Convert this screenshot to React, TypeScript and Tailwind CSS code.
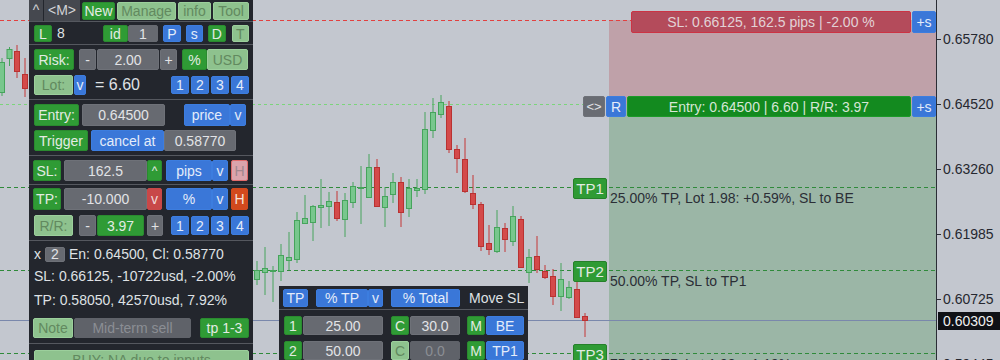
import clsx from "clsx"
import { ReactNode } from "react"

type Tone = "green" | "faded" | "grey" | "blue" | "red" | "orange" | "pink" | "dim" | "dark"

const tones: Record<Tone, string> = {
    green: "bg-[#2f9b35] border-[#2a8a2f] text-[#e3ebe3]",
    faded: "bg-[#8ec28e] border-[#9ccf9c] text-[#62895f]",
    grey: "bg-[#676a71] border-[#6e7178] text-[#e2e3e6]",
    blue: "bg-[#3a77d8] border-[#3c7ddf] text-[#e4ecfa]",
    red: "bg-[#c84848] border-[#c84848] text-[#f0dada]",
    orange: "bg-[#d2491d] border-[#d2491d] text-[#f5e2da]",
    pink: "bg-[#dba4ac] border-[#e06b6b] text-[#a2878e]",
    dim: "bg-[#5f6269] border-[#5f6269] text-[#8b8e94]",
    dark: "bg-[#45484f] border-[#45484f] text-[#d2d3d6]",
}

// small square-ish control used everywhere in the panels
function B({ t, className, children }: { t: Tone; className?: string; children: ReactNode }) {
    return (
        <div className={clsx("flex items-center justify-center rounded-[2px] border h-full leading-none shrink-0 whitespace-nowrap", tones[t], className)}>
            {children}
        </div>
    )
}

// [x, bodyTop, bodyBottom, wickTop, wickBottom, up]
const candles: [number, number, number, number, number, boolean][] = [
    [2, 62, 92, 58, 96, true],
    [9.5, 49, 58, 47, 66, true],
    [17, 51, 71, 45, 78, false],
    [25, 74, 88, 58, 97, false],
    [257, 270, 279, 261, 285, true],
    [265, 268, 272, 247, 295, true],
    [273, 270, 271, 266, 302, true],
    [281, 255, 271, 244, 281, true],
    [289, 257, 260, 232, 270, true],
    [297, 220, 259, 212, 263, true],
    [305, 218, 223, 195, 224, true],
    [313, 206, 222, 205, 241, true],
    [321, 205, 207, 179, 228, true],
    [329, 201, 206, 192, 226, true],
    [337, 202, 218, 191, 221, false],
    [345, 200, 219, 193, 237, true],
    [353, 186, 202, 182, 208, true],
    [361, 187, 188, 166, 224, true],
    [369, 167, 197, 154, 198, true],
    [377, 167, 206, 159, 207, false],
    [385, 196, 207, 187, 227, true],
    [393, 182, 194, 173, 203, true],
    [401, 182, 212, 177, 227, false],
    [409, 188, 208, 179, 217, true],
    [417, 188, 190, 179, 197, true],
    [425, 129, 189, 112, 194, true],
    [433, 112, 130, 98, 138, true],
    [441, 102, 114, 95, 118, true],
    [449, 106, 149, 101, 153, false],
    [457, 149, 158, 145, 173, false],
    [465, 159, 191, 138, 193, false],
    [473, 193, 204, 175, 209, false],
    [481, 204, 246, 202, 251, false],
    [489, 243, 249, 225, 255, false],
    [497, 227, 251, 210, 253, true],
    [505, 228, 239, 223, 252, false],
    [513, 216, 241, 206, 246, true],
    [521, 219, 267, 216, 267, false],
    [529, 257, 272, 249, 283, true],
    [537, 256, 269, 236, 273, false],
    [545, 271, 277, 265, 279, false],
    [553, 276, 296, 269, 305, false],
    [561, 279, 296, 263, 311, true],
    [569, 287, 297, 281, 299, true],
    [577, 289, 317, 282, 318, false],
    [585, 316, 320, 313, 337, false],
]

function Chart() {
    return (
        <svg className="absolute inset-0" width={1000} height={360}>
            <rect x={609} y={20} width={327} height={84} fill="#bfa1a9" />
            <rect x={609} y={104} width={327} height={256} fill="#9bb6a6" />
            <line x1={0} y1={20.5} x2={632} y2={20.5} stroke="#e2403f" strokeDasharray="4 3" />
            <line x1={0} y1={104.5} x2={583} y2={104.5} stroke="#7bd47b" strokeDasharray="3 3" />
            {[187.5, 270.5, 353.5].map((y) => (
                <line key={y} x1={0} y1={y} x2={936} y2={y} stroke="#2f8a3a" strokeDasharray="4 3" />
            ))}
            <line x1={0} y1={320.5} x2={936} y2={320.5} stroke="#7a88ac" />
            {candles.map(([x, bt, bb, wt, wb, up]) => (
                <g key={x}>
                    <line x1={x} y1={wt} x2={x} y2={wb} stroke={up ? "#46a45c" : "#c43636"} />
                    <rect
                        x={x - 2.5}
                        y={bt + 0.5}
                        width={5}
                        height={Math.max(bb - bt, 1)}
                        fill={up ? "#78c78d" : "#d44a4a"}
                        stroke={up ? "#46a45c" : "#b93232"}
                    />
                </g>
            ))}
            <line x1={936.5} y1={0} x2={936.5} y2={360} stroke="#2a2d35" />
            {[39, 104, 169, 234, 299, 364].map((y) => (
                <line key={y} x1={936} y1={y + 0.5} x2={941} y2={y + 0.5} stroke="#2a2d35" />
            ))}
        </svg>
    )
}

const axis = [
    ["0.65780", 39],
    ["0.64520", 104],
    ["0.63260", 169],
    ["0.61985", 234],
    ["0.60725", 299],
    ["0.59445", 364],
] as const

export default function App() {
    return (
        <div className="relative w-[1000px] h-[360px] overflow-hidden bg-[#c3c7cf] font-['Liberation_Sans',Arial,sans-serif] text-[14px]">
            <Chart />

            {/* price axis */}
            {axis.map(([p, y]) => (
                <div key={p} className="absolute left-[943px] h-[16px] leading-[16px] text-[#262830]" style={{ top: y - 8 }}>
                    {p}
                </div>
            ))}
            <div className="absolute left-[938px] top-[312px] w-[62px] h-[18px] bg-[#0f1116] text-[#f0f0f0] leading-[18px] pl-[5px]">
                0.60309
            </div>

            {/* SL / entry labels */}
            <div className="absolute left-[631px] top-[11px] flex h-[22px] gap-px">
                <B t="red" className="w-[280px] !bg-[#b44b5b] !border-[#cc3344] !text-[#e2d2d6]">SL: 0.66125, 162.5 pips | -2.00 %</B>
                <B t="blue" className="w-[24px]">+s</B>
            </div>
            <div className="absolute left-[583px] top-[96px] flex h-[21px] gap-px">
                <B t="grey" className="w-[22px] !bg-[#696c73] text-[13px]">&lt;&gt;</B>
                <B t="blue" className="w-[20px]">R</B>
                <B t="green" className="w-[284px] !bg-[#138a1f] !border-[#1c9a28] !text-[#d6e6d6]">Entry: 0.64500 | 6.60 | R/R: 3.97</B>
                <B t="blue" className="w-[24px]">+s</B>
            </div>

            {/* TP labels */}
            {[
                ["TP1", 178, "25.00% TP, Lot 1.98: +0.59%, SL to BE"],
                ["TP2", 261, "50.00% TP, SL to TP1"],
                ["TP3", 344, "75.00% TP, Lot 1.98: +1.19%"],
            ].map(([n, y, txt]) => (
                <div key={n} className="absolute left-[573px] flex items-start" style={{ top: y as number }}>
                    <B t="green" className="w-[34px] !h-[21px] text-[15px] !border-[#25802a]">{n}</B>
                    <div className="ml-[3px] mt-[12px] text-[#2b2e36] leading-[16px] whitespace-nowrap">{txt}</div>
                </div>
            ))}

            {/* main trade panel */}
            <div className="absolute left-[29px] top-0 w-[224px] h-[360px] bg-[#23262d] text-[#dfe1e4] flex flex-col">
                <div className="flex h-[23px] items-center border-b border-[#55585f]">
                    <div className="w-[14px] h-full bg-[#45484f] flex items-center justify-center text-[#d2d3d6]">^</div>
                    <div className="w-[36px] h-full ml-px bg-[#45484f] flex items-center justify-center text-[#d2d3d6]">&lt;M&gt;</div>
                    <div className="flex h-[18px] gap-[2px] ml-[2px]">
                        <B t="green" className="w-[33px]">New</B>
                        <B t="faded" className="w-[59px]">Manage</B>
                        <B t="faded" className="w-[33px]">info</B>
                        <B t="faded" className="w-[36px]">Tool</B>
                    </div>
                </div>

                <div className="pt-[3px] pb-[2px] border-b border-[#55585f]">
                    <div className="flex h-[17px] items-center">
                        <B t="green" className="w-[18px] ml-[5px]">L</B>
                        <span className="ml-[5px]">8</span>
                        <B t="green" className="w-[25px] ml-[38px]">id</B>
                        <B t="grey" className="w-[30px] !border-[#676a71]">1</B>
                        <B t="blue" className="w-[18px] ml-[5px]">P</B>
                        <B t="blue" className="w-[17px] ml-[5px]">s</B>
                        <B t="green" className="w-[18px] ml-[5px]">D</B>
                        <B t="faded" className="w-[17px] ml-[6px]">T</B>
                    </div>
                </div>

                <div className="pt-[4px] pb-[4px] border-b border-[#55585f] flex flex-col gap-[5px]">
                    <div className="flex h-[21px] items-center">
                        <B t="green" className="w-[40px] ml-[5px]">Risk:</B>
                        <B t="grey" className="w-[17px] ml-[5px]">-</B>
                        <B t="grey" className="w-[62px] ml-px">2.00</B>
                        <B t="grey" className="w-[17px] ml-px">+</B>
                        <B t="green" className="w-[25px] ml-[5px]">%</B>
                        <B t="faded" className="w-[41px]">USD</B>
                    </div>
                    <div className="flex h-[20px] items-center">
                        <B t="faded" className="w-[39px] ml-[5px]">Lot:</B>
                        <B t="blue" className="w-[12px] ml-px">v</B>
                        <span className="ml-[9px] text-[16px]">= 6.60</span>
                        <div className="ml-auto mr-[4px] flex h-[18px] gap-[2px]">
                            {["1", "2", "3", "4"].map((n) => (
                                <B key={n} t="blue" className="w-[18px]">{n}</B>
                            ))}
                        </div>
                    </div>
                </div>

                <div className="pt-[4px] pb-[4px] border-b border-[#55585f] flex flex-col gap-[4px]">
                    <div className="flex h-[22px] items-center">
                        <B t="green" className="w-[45px] ml-[5px]">Entry:</B>
                        <B t="grey" className="w-[83px] ml-[3px]">0.64500</B>
                        <B t="blue" className="w-[46px] ml-[19px]">price</B>
                        <B t="blue" className="w-[16px]">v</B>
                    </div>
                    <div className="flex h-[21px] items-center">
                        <B t="green" className="w-[54px] ml-[5px]">Trigger</B>
                        <B t="blue" className="w-[73px] ml-[3px]">cancel at</B>
                        <B t="grey" className="w-[72px]">0.58770</B>
                    </div>
                </div>

                <div className="pt-[4px] pb-[3px] border-b border-[#55585f]">
                    <div className="flex h-[21px] items-center">
                        <B t="green" className="w-[28px] ml-[4px]">SL:</B>
                        <B t="grey" className="w-[83px] ml-[3px]">162.5</B>
                        <B t="green" className="w-[15px] text-[12px]">^</B>
                        <B t="blue" className="w-[46px] ml-[4px]">pips</B>
                        <B t="blue" className="w-[16px]">v</B>
                        <B t="pink" className="w-[17px] ml-[3px]">H</B>
                    </div>
                </div>

                <div className="pt-[3px] pb-[4px] border-b border-[#55585f] flex flex-col gap-[5px]">
                    <div className="flex h-[22px] items-center">
                        <B t="green" className="w-[28px] ml-[4px]">TP:</B>
                        <B t="grey" className="w-[83px] ml-[3px]">-10.000</B>
                        <B t="red" className="w-[15px]">v</B>
                        <B t="blue" className="w-[46px] ml-[4px]">%</B>
                        <B t="blue" className="w-[16px]">v</B>
                        <B t="orange" className="w-[17px] ml-[3px]">H</B>
                    </div>
                    <div className="flex h-[21px] items-center">
                        <B t="faded" className="w-[39px] ml-[5px]">R/R:</B>
                        <B t="grey" className="w-[17px] ml-[6px]">-</B>
                        <B t="green" className="w-[47px] ml-px">3.97</B>
                        <B t="grey" className="w-[16px] ml-[3px]">+</B>
                        <div className="ml-auto mr-[4px] flex h-[19px] gap-[2px]">
                            {["1", "2", "3", "4"].map((n) => (
                                <B key={n} t="blue" className="w-[18px]">{n}</B>
                            ))}
                        </div>
                    </div>
                </div>

                <div className="pt-[5px] pb-[5px] border-b border-[#55585f] flex flex-col">
                    <div className="flex h-[16px] items-center">
                        <span className="ml-[5px]">x</span>
                        <B t="grey" className="w-[20px] ml-[4px] !h-[15px]">2</B>
                        <span className="ml-[4px]">En: 0.64500, Cl: 0.58770</span>
                    </div>
                    <div className="h-[16px] mt-[6px] ml-[5px] leading-[16px]">SL: 0.66125, -10722usd, -2.00%</div>
                    <div className="h-[16px] mt-[8px] ml-[5px] leading-[16px]">TP: 0.58050, 42570usd, 7.92%</div>
                    <div className="flex h-[20px] mt-[10px] items-center">
                        <B t="faded" className="w-[40px] ml-[4px]">Note</B>
                        <B t="dim" className="w-[117px] ml-px">Mid-term sell</B>
                        <B t="green" className="w-[49px] ml-[9px]">tp 1-3</B>
                    </div>
                </div>

                <div className="pt-[6px] pl-[5px] pr-[4px]">
                    <B t="faded" className="!h-[20px]">BUY: NA due to inputs</B>
                </div>
            </div>

            {/* partial TP panel */}
            <div className="absolute left-[279px] top-[286px] w-[249px] h-[80px] bg-[#23262d] text-[#dfe1e4] flex flex-col">
                <div className="flex h-[18px] mt-[3px] items-center">
                    <B t="blue" className="w-[25px] ml-[4px]">TP</B>
                    <B t="blue" className="w-[52px] ml-[8px]">% TP</B>
                    <B t="blue" className="w-[15px]">v</B>
                    <B t="blue" className="w-[69px] ml-[8px]">% Total</B>
                    <span className="ml-[9px] whitespace-nowrap">Move SL</span>
                </div>
                <div className="mt-[2px] border-t border-[#55585f]" />
                {[
                    ["1", "25.00", "30.0", "BE", true],
                    ["2", "50.00", "0.0", "TP1", false],
                ].map(([n, p, c, m, on]) => (
                    <div key={n as string} className="flex h-[19px] mt-[6px] items-center">
                        <B t="green" className="w-[18px] ml-[5px]">{n}</B>
                        <B t="grey" className="w-[80px] ml-px">{p}</B>
                        <B t={on ? "green" : "faded"} className="w-[18px] ml-[8px]">C</B>
                        <B t={on ? "grey" : "dim"} className="w-[50px] ml-px">{c}</B>
                        <B t="green" className="w-[18px] ml-[7px]">M</B>
                        <B t="blue" className="w-[38px] ml-px">{m}</B>
                    </div>
                ))}
            </div>
        </div>
    )
}
